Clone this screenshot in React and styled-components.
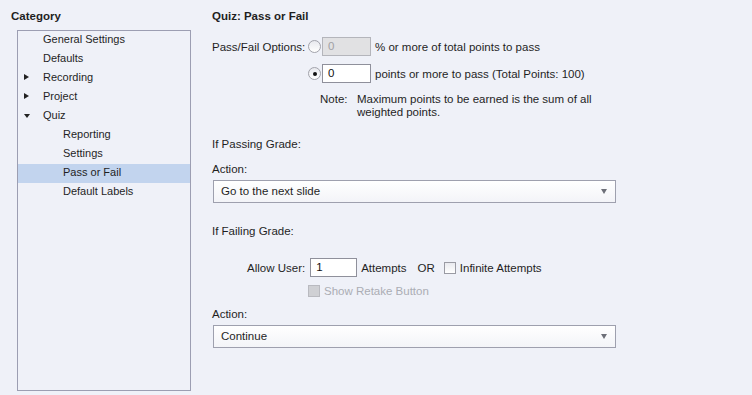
import React from 'react';
import styled, { createGlobalStyle } from 'styled-components';

const GlobalStyle = createGlobalStyle`
  html, body {
    margin: 0;
    padding: 0;
    background: #eff1f8;
  }
  body {
    font-family: "Liberation Sans", Arial, sans-serif;
    font-size: 11px;
    color: #1f1f1f;
  }
`;

const categories = [
  { label: 'General Settings', level: 1 },
  { label: 'Defaults', level: 1 },
  { label: 'Recording', level: 1, arrow: 'right' },
  { label: 'Project', level: 1, arrow: 'right' },
  { label: 'Quiz', level: 1, arrow: 'down' },
  { label: 'Reporting', level: 2 },
  { label: 'Settings', level: 2 },
  { label: 'Pass or Fail', level: 2, selected: true },
  { label: 'Default Labels', level: 2 },
];

const Page = styled.div`
  display: flex;
  width: 752px;
  height: 395px;
`;

const Sidebar = styled.div`
  width: 201px;
  padding-left: 11px;
  display: flex;
  flex-direction: column;
`;

const Heading = styled.div`
  font-weight: bold;
  font-size: 11.5px;
  line-height: 14px;
  margin-top: 9px;
`;

const Tree = styled.div`
  margin: 7px 0 0 6px;
  width: 172px;
  height: 359px;
  border: 1px solid #9c9eb2;
  background: #eff1f8;
`;

const TreeRow = styled.div`
  position: relative;
  height: 19px;
  line-height: 17px;
  padding-left: ${p => (p.$level === 2 ? 45 : 25)}px;
  background: ${p => (p.$selected ? '#c2d4ee' : 'transparent')};
`;

const Arrow = styled.span`
  position: absolute;
  left: 6px;
  top: ${p => (p.$dir === 'down' ? 7 : 5)}px;
  width: 0;
  height: 0;
  ${p => p.$dir === 'down'
    ? `border-left: 3.5px solid transparent; border-right: 3.5px solid transparent; border-top: 4px solid #222;`
    : `border-top: 3.5px solid transparent; border-bottom: 3.5px solid transparent; border-left: 5px solid #222;`}
`;

const Panel = styled.div`
  flex: 1;
  display: flex;
  flex-direction: column;
  font-size: 11.5px;
`;

const Text = styled.div`
  line-height: 14px;
  margin-top: ${p => p.$mt || 0}px;
`;

const OptionsGrid = styled.div`
  display: grid;
  grid-template-columns: 96px auto;
  row-gap: 8px;
  margin-top: 14px;
  align-items: center;
`;

const Choice = styled.div`
  display: flex;
  align-items: center;
  height: 19px;
`;

const Radio = styled.span`
  position: relative;
  width: 11px;
  height: 11px;
  border-radius: 50%;
  border: 1px solid #a2a3ab;
  background: linear-gradient(#e8e9ee, #ffffff);
  margin-right: 1px;
  ${p => p.$checked && `
    &::after {
      content: '';
      position: absolute;
      left: 3.5px;
      top: 3.5px;
      width: 4px;
      height: 4px;
      border-radius: 50%;
      background: #111;
    }
  `}
`;

const NumberBox = styled.div`
  box-sizing: border-box;
  width: ${p => p.$w || 49}px;
  height: 19px;
  line-height: 17px;
  padding-left: 5px;
  border: 1px solid ${p => (p.$disabled ? '#b4b5bb' : '#8f909b')};
  background: ${p => (p.$disabled ? '#e1e1e3' : '#ffffff')};
  color: ${p => (p.$disabled ? '#a0a0a4' : '#111')};
  margin-right: 4px;
`;

const Note = styled.div`
  display: grid;
  grid-template-columns: 37px 262px;
  line-height: 13px;
  margin: 10px 0 0 108px;
`;

const Select = styled.div`
  box-sizing: border-box;
  display: flex;
  align-items: center;
  justify-content: space-between;
  width: 403px;
  height: 23px;
  margin: 4px 0 0 1px;
  padding: 0 8px 1px 7px;
  border: 1px solid #9ea0ae;
  background: linear-gradient(#ffffff, #f3f4f8);
`;

const Caret = styled.span`
  width: 0;
  height: 0;
  border-left: 3.5px solid transparent;
  border-right: 3.5px solid transparent;
  border-top: 5px solid #6d6f78;
`;

const AttemptRow = styled.div`
  display: flex;
  align-items: center;
  height: 19px;
  margin: 20px 0 0 35px;
`;

const Gap = styled.span`
  margin-left: ${p => p.$w}px;
`;

const Check = styled.span`
  box-sizing: border-box;
  width: 12px;
  height: 12px;
  border: 1px solid ${p => (p.$disabled ? '#b9bac0' : '#9a9ba4')};
  background: ${p => (p.$disabled ? '#cfd0d4' : 'linear-gradient(#e9eaef, #ffffff)')};
  margin-right: 4px;
`;

const CheckRow = styled.div`
  display: flex;
  align-items: center;
  height: 14px;
  margin: 7px 0 0 96px;
  color: ${p => (p.$disabled ? '#abadb4' : 'inherit')};
`;

export default function App() {
  return (
    <>
      <GlobalStyle />
      <Page>
        <Sidebar>
          <Heading>Category</Heading>
          <Tree>
            {categories.map(c => (
              <TreeRow key={c.label} $level={c.level} $selected={c.selected}>
                {c.arrow && <Arrow $dir={c.arrow} />}
                {c.label}
              </TreeRow>
            ))}
          </Tree>
        </Sidebar>
        <Panel>
          <Heading>Quiz: Pass or Fail</Heading>
          <OptionsGrid>
            <Text>Pass/Fail Options:</Text>
            <Choice>
              <Radio />
              <NumberBox $disabled>0</NumberBox>
              % or more of total points to pass
            </Choice>
            <span />
            <Choice>
              <Radio $checked />
              <NumberBox>0</NumberBox>
              points or more to pass (Total Points: 100)
            </Choice>
          </OptionsGrid>
          <Note>
            <span>Note:</span>
            <span>Maximum points to be earned is the sum of all weighted points.</span>
          </Note>
          <Text $mt={18}>If Passing Grade:</Text>
          <Text $mt={11}>Action:</Text>
          <Select>
            Go to the next slide
            <Caret />
          </Select>
          <Text $mt={21}>If Failing Grade:</Text>
          <AttemptRow>
            Allow User:
            <Gap $w={5} />
            <NumberBox $w={47}>1</NumberBox>
            Attempts
            <Gap $w={11} />
            OR
            <Gap $w={9} />
            <Check />
            Infinite Attempts
          </AttemptRow>
          <CheckRow $disabled>
            <Check $disabled />
            Show Retake Button
          </CheckRow>
          <Text $mt={9}>Action:</Text>
          <Select>
            Continue
            <Caret />
          </Select>
        </Panel>
      </Page>
    </>
  );
}
